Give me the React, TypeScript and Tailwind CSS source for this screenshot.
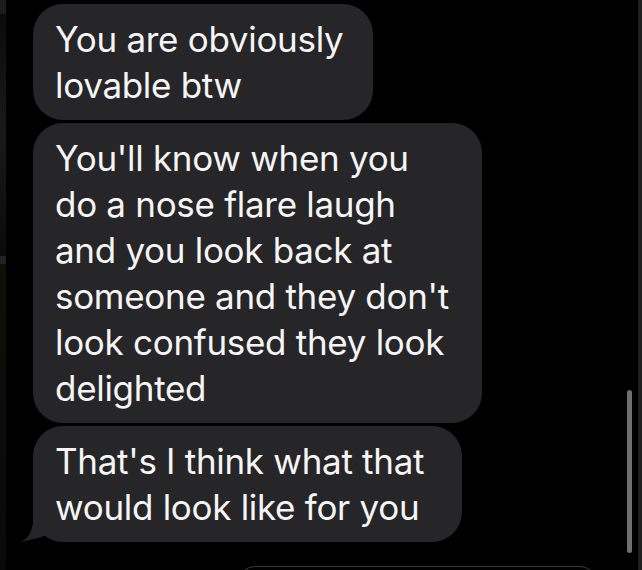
export default function App() {
  const bubbles = [
    { w: "w-[340px]", lines: ["You are obviously", "lovable btw"] },
    {
      w: "w-[449px]",
      lines: [
        "You'll know when you",
        "do a nose flare laugh",
        "and you look back at",
        "someone and they don't",
        "look confused they look",
        "delighted",
      ],
    },
    { w: "w-[429px]", lines: ["That's I think what that", "would look like for you"], tail: true },
  ];

  return (
    <div className="relative flex h-[570px] w-[642px] overflow-hidden bg-black">
      <div className="flex w-[6px] flex-col">
        <div className="h-[14px] bg-[#1c1c1d]" />
        <div className="h-[242px] bg-gradient-to-b from-[#0b0b0b] via-[#1a1a1a] to-[#0a0a0a]" />
        <div className="h-[8px] bg-[#222222]" />
        <div className="flex-1 bg-gradient-to-b from-[#120f0a] to-[#0a0906]" />
      </div>

      <div
        className="flex flex-1 flex-col gap-[3px] pl-[27px] pt-[4px]"
        style={{ fontFamily: 'Inter, "Liberation Sans", sans-serif' }}
      >
        {bubbles.map((b, i) => (
          <div
            key={i}
            className={`relative ${b.w} rounded-[30px] bg-[#262628] px-[22px] py-[12px] text-[35px] leading-[46px] tracking-[-0.3px] text-[#f5f5f5]`}
          >
            {b.lines.map((l) => (
              <div key={l} className="whitespace-nowrap">
                {l}
              </div>
            ))}
            {b.tail && (
              <svg
                className="absolute bottom-0 left-[-12px]"
                width="30"
                height="30"
                viewBox="0 0 30 30"
              >
                <path d="M12 0 L30 0 L30 30 L30 22 C24 24 18 26 0 30 C8 26 12 18 12 8 Z" fill="#262628" />
              </svg>
            )}
          </div>
        ))}
        <div className="mt-[21px] ml-[203px] h-[40px] w-[363px] shrink-0 rounded-t-[20px] border border-[#3a3a3c] bg-black" />
      </div>

      <div className="w-[4px] bg-[#1f1f20]" />

      <div className="absolute left-[627px] top-[390px] h-[163px] w-[5px] rounded-full bg-[#6f6f70]" />
    </div>
  );
}
